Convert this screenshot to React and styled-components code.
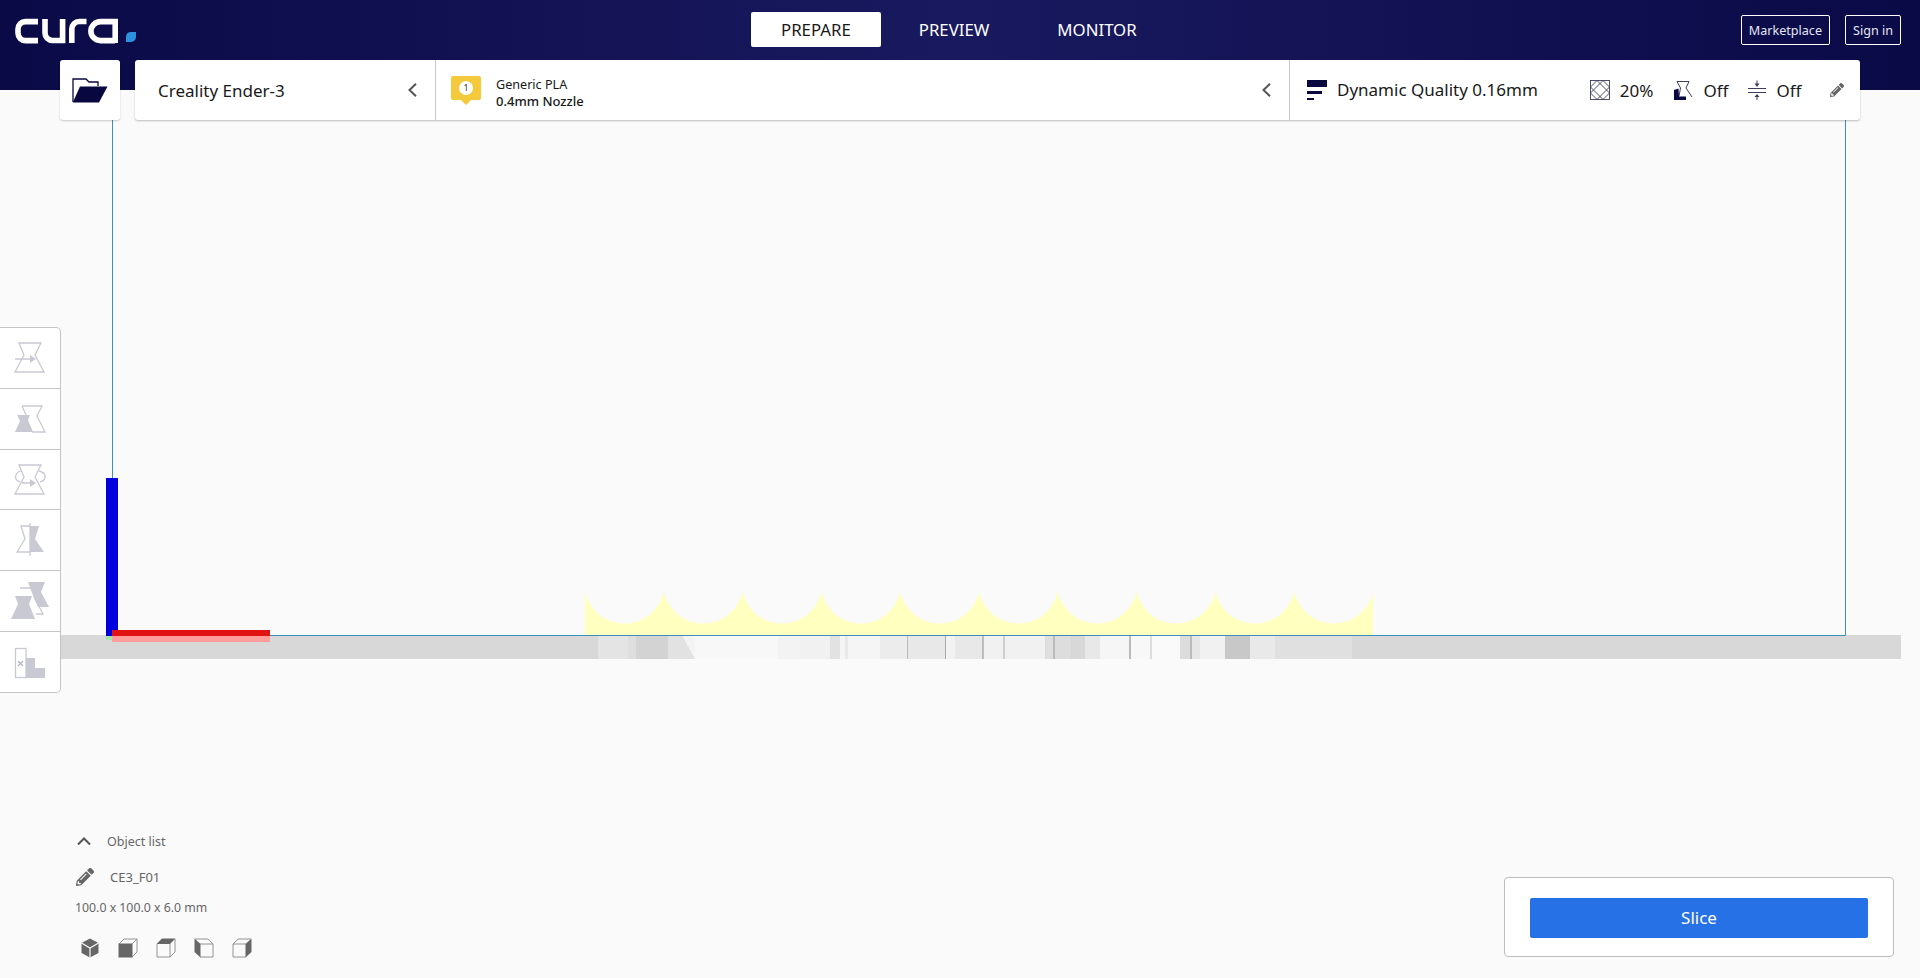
import React from 'react'
import styled, { createGlobalStyle } from 'styled-components'
import { FaPencilAlt } from 'react-icons/fa'

const GlobalStyle = createGlobalStyle`
  html, body {
    margin: 0;
    padding: 0;
    height: 100%;
    overflow: hidden;
    background: #fafafa;
    font-family: 'Noto Sans', 'Open Sans', sans-serif;
    color: #191919;
  }
  * { box-sizing: border-box; }
`

// stripes of the plate edge seen from the side: [x, width, colour]
const plateStripes = [
  [598, 30, '#e4e4e4'], [628, 8, '#dedede'], [636, 32, '#d3d3d3'], [695, 83, '#f8f8f8'],
  [778, 22, '#f3f3f3'], [800, 30, '#f1f1f1'], [830, 10, '#e2e2e2'], [840, 40, '#f5f5f5'],
  [845, 3, '#e9e9e9'], [880, 27, '#ececec'], [907, 1, '#b9b9b9'], [908, 37, '#e8e8e8'],
  [945, 1, '#aaaaaa'], [946, 9, '#f2f2f2'], [955, 27, '#e8e8e8'], [982, 2, '#bdbdbd'],
  [984, 61, '#f1f1f1'], [1003, 2, '#cfcfcf'], [1045, 8, '#dedede'], [1053, 2, '#bbbbbb'],
  [1055, 16, '#dddddd'], [1071, 14, '#d8d8d8'], [1085, 15, '#e8e8e8'], [1100, 29, '#f6f6f6'],
  [1129, 2, '#bbbbbb'], [1131, 19, '#f8f8f8'], [1150, 2, '#dddddd'], [1152, 28, '#fafafa'],
  [1180, 10, '#dcdcdc'], [1190, 2, '#bbbbbb'], [1192, 8, '#e6e6e6'], [1200, 25, '#f1f1f1'],
  [1225, 25, '#c8c8c8'], [1250, 25, '#e9e9e9'], [1275, 77, '#e0e0e0'],
]

const scallopPath = () => {
  let d = 'M585 635 V592'
  for (let i = 1; i <= 10; i++) {
    d += ` A40.4 40.4 0 0 0 ${585 + i * 78.8} 592`
  }
  return d + ' V635 Z'
}

const Scene = () => (
  <SceneSvg viewBox="0 0 1920 978">
    <defs>
      <filter id="soften" x="0" y="0" width="100%" height="100%">
        <feGaussianBlur stdDeviation="0.7 0" />
      </filter>
    </defs>
    <rect x="61" y="635" width="1840" height="24" fill="#d8d8d8" />
    <g filter="url(#soften)">
      <rect x="598" y="635" width="754" height="24" fill="#f4f4f4" />
      {plateStripes.map(([x, w, c]) => (
        <rect key={x + c} x={x} y="635" width={w} height="24" fill={c} />
      ))}
      <polygon points="668,635 682,635 695,659 668,659" fill="#e2e2e2" />
    </g>
    <path d={scallopPath()} fill="#ffffbf" />
    <path d="M112.5 100 V635.5 H1845.5 V100" fill="none" stroke="#3f8fb8" strokeWidth="1" />
    <rect x="106" y="636" width="6" height="4" fill="#a6e6a6" />
    <rect x="106" y="478" width="12" height="158" fill="#0000de" />
    <rect x="112" y="630" width="158" height="6" fill="#e01212" />
    <rect x="112" y="636" width="158" height="6" fill="#ff9c9c" />
  </SceneSvg>
)

const CuraLogo = () => (
  <svg width="122" height="26" viewBox="0 0 122 26" fill="none" stroke="#fff" strokeWidth="5.6">
    <path d="M23 3.6 H10.5 a7.5 7.5 0 0 0 -7.5 7.5 v4 a7.5 7.5 0 0 0 7.5 7.5 H23" />
    <path d="M30 1 V15 a7.5 7.5 0 0 0 7.5 7.5 H47.6 V1" />
    <path d="M56.8 25 V11 a7.5 7.5 0 0 1 7.5 -7.5 H71.5" />
    <path d="M100.2 25 V3.6 H85.5 a9.6 9.6 0 0 0 -9.6 9.6 a9.6 9.6 0 0 0 9.6 9.4 H100.2" />
    <path
      d="M115.5 14 H121 V19 a5 5 0 0 1 -5 5 H111 V19 a5 5 0 0 1 4.5 -5 Z"
      fill="#2c92de"
      stroke="none"
    />
  </svg>
)

const FolderIcon = () => (
  <svg width="36" height="26" viewBox="0 0 36 26">
    <path d="M1 24 V1 H14 L17 4 H26 V8" fill="none" stroke="#08073f" strokeWidth="1.3" />
    <path d="M8 8.5 H35.5 L27 24.5 H0.8 Z" fill="#08073f" />
  </svg>
)

const Chevron = ({ up }) => (
  <svg width="14" height="14" viewBox="0 0 14 14" fill="none" stroke="#555" strokeWidth="2">
    {up ? <path d="M1 10.5 L7 4.5 L13 10.5" /> : <path d="M10 0.8 L3.5 7 L10 13.2" />}
  </svg>
)

const MaterialBadge = () => (
  <svg width="30" height="29" viewBox="0 0 30 29">
    <path d="M2 0 H28 a2 2 0 0 1 2 2 V22 a2 2 0 0 1 -2 2 H20 L15 29 L10 24 H2 a2 2 0 0 1 -2 -2 V2 a2 2 0 0 1 2 -2 Z" fill="#f4c93c" />
    <circle cx="15" cy="12" r="7" fill="#fff" />
    <text x="15" y="15.2" textAnchor="middle" fontSize="9" fontFamily="Noto Sans" fill="#333">1</text>
  </svg>
)

const QualityIcon = () => (
  <svg width="20" height="20" viewBox="0 0 20 20" fill="#08073f">
    <rect x="0" y="0" width="20" height="7" />
    <rect x="0" y="11" width="15" height="3" />
    <rect x="0" y="18" width="7" height="2" />
  </svg>
)

const InfillIcon = () => (
  <svg width="20" height="20" viewBox="0 0 20 20" fill="none" stroke="#3c3c5c" strokeWidth="0.9">
    <rect x="0.5" y="0.5" width="19" height="19" />
    <path d="M0.5 7 L7 0.5 L19.5 13 L13 19.5 L0.5 7 M13 0.5 L19.5 7 L7 19.5 L0.5 13 L13 0.5" />
  </svg>
)

const SupportIcon = () => (
  <svg width="20" height="20" viewBox="0 0 20 20">
    <path d="M6 16 L7.5 8 L4 1.5 H16 L13 8 L19 17" fill="none" stroke="#3c3c5c" strokeWidth="1" />
    <path d="M1 10 L5.5 8.5 L6 16.5 H13 V20 H1 Z" fill="#08073f" />
  </svg>
)

const AdhesionIcon = () => (
  <svg width="18" height="20" viewBox="0 0 18 20" fill="#3c3c5c">
    <rect x="0" y="8" width="18" height="1" />
    <rect x="0" y="12" width="18" height="1" />
    <path d="M9 7 L6.5 3.5 H8.5 V0.5 H9.5 V3.5 H11.5 Z" />
    <path d="M9 14 L11.5 17 H9.5 V20 H8.5 V17 H6.5 Z" />
  </svg>
)

const VASE = 'M7 3 H29 L23 15 L32 32 H3 L12 15 Z'
const toolIcons = [
  {
    key: 'move',
    size: 36,
    body: (
      <>
        <path d={VASE} fill="none" stroke="#c9c9d4" strokeWidth="1.3" />
        <path d="M3 19 H18" stroke="#c9c9d4" strokeWidth="1.5" />
        <path d="M18 15 L24 19 L18 23 Z" fill="#c9c9d4" />
      </>
    ),
  },
  {
    key: 'scale',
    size: 36,
    body: (
      <>
        <path d="M10 5 H30 L25 15 L33 31 H20 M14 14 L10 5" fill="none" stroke="#c9c9d4" strokeWidth="1.3" />
        <path d="M5 14 H18 L16 19 L21 31 H3 L8 20 Z" fill="#c9c9d4" />
      </>
    ),
  },
  {
    key: 'rotate',
    size: 36,
    body: (
      <>
        <path d={VASE} fill="none" stroke="#c9c9d4" strokeWidth="1.3" />
        <path d="M9 9 C2 11 2 18 8 20 M27 9 C35 11 35 18 28 20" fill="none" stroke="#c9c9d4" strokeWidth="1.3" />
        <path d="M10 21 H19" stroke="#c9c9d4" strokeWidth="1.5" />
        <path d="M18 17 L24 21 L18 25 Z" fill="#c9c9d4" />
      </>
    ),
  },
  {
    key: 'mirror',
    size: 36,
    body: (
      <>
        <path d="M18 4 H9 L13 17 L5 30 H18" fill="none" stroke="#c9c9d4" strokeWidth="1.3" />
        <path d="M18 4 H27 L23 17 L32 30 H18 Z" fill="#c9c9d4" />
        <path d="M18 1 V34" stroke="#c9c9d4" strokeWidth="1.3" />
      </>
    ),
  },
  {
    key: 'permodel',
    size: 44,
    body: (
      <>
        <path d="M20 3 H37 L33 13 L41 28 H30 L24 14 Z" fill="#c9c9d4" />
        <path d="M12 9 H29 L26 18 L35 35 H28" fill="none" stroke="#c9c9d4" strokeWidth="1.3" />
        <path d="M7 17 H24 L21 25 L27 40 H3 L10 25 Z" fill="#c9c9d4" />
      </>
    ),
  },
  {
    key: 'blocker',
    size: 36,
    body: (
      <>
        <rect x="3.5" y="4.5" width="10.5" height="29" fill="none" stroke="#c9c9d4" strokeWidth="1.3" />
        <path d="M14 14 H23 V24 H33 V34 H14 Z" fill="#c9c9d4" />
        <path d="M6 17 L11 22 M11 17 L6 22" stroke="#b4b4c2" strokeWidth="1.2" />
      </>
    ),
  },
]

const viewFaces = [
  {
    key: 'iso',
    body: (
      <>
        <path d="M10 0.5 L18.5 5 V15 L10 19.5 L1.5 15 V5 Z" fill="#666" />
        <path d="M1.5 5 L10 10 L18.5 5 M10 10 V19.5" fill="none" stroke="#fafafa" strokeWidth="1.2" />
      </>
    ),
  },
  {
    key: 'front',
    body: (
      <>
        <path d="M1 6 L6 1 H19 V14 L14 19 M14 6 L19 1" fill="none" stroke="#888" strokeWidth="0.9" />
        <rect x="0.5" y="5.5" width="14" height="14" fill="#666" />
      </>
    ),
  },
  {
    key: 'top',
    body: (
      <>
        <path d="M1 6 V19 H14 L19 14 V1 M14 6 V19" fill="none" stroke="#888" strokeWidth="0.9" />
        <path d="M0.5 6 L6 0.5 H19.5 L14 6 Z" fill="#666" />
      </>
    ),
  },
  {
    key: 'left',
    body: (
      <>
        <path d="M1 1 H14 L19 6 V19 H6 M6 6 H19" fill="none" stroke="#888" strokeWidth="0.9" />
        <path d="M0.5 0.5 L6.5 6 V19.5 L0.5 14 Z" fill="#666" />
      </>
    ),
  },
  {
    key: 'right',
    body: (
      <>
        <path d="M14 6 H1 V19 H14 M1 6 L6 1 H19" fill="none" stroke="#888" strokeWidth="0.9" />
        <path d="M19.5 0.5 L13.5 6 V19.5 L19.5 14 Z" fill="#666" />
      </>
    ),
  },
]

const App = () => {
  return (
    <Page>
      <GlobalStyle />
      <Scene />

      <Header>
        <LogoSlot>
          <CuraLogo />
        </LogoSlot>
        <Tabs>
          <Tab $active>PREPARE</Tab>
          <Tab>PREVIEW</Tab>
          <Tab>MONITOR</Tab>
        </Tabs>
        <HeaderActions>
          <OutlineButton>Marketplace</OutlineButton>
          <OutlineButton>Sign in</OutlineButton>
        </HeaderActions>
      </Header>

      <ActionRow>
        <OpenButton>
          <FolderIcon />
        </OpenButton>
        <StageBar>
          <PrinterCell>
            <PrinterName>Creality Ender-3</PrinterName>
            <Chevron />
          </PrinterCell>
          <MaterialCell>
            <MaterialBadge />
            <MaterialLabels>
              <span>Generic PLA</span>
              <strong>0.4mm Nozzle</strong>
            </MaterialLabels>
            <ChevronSlot>
              <Chevron />
            </ChevronSlot>
          </MaterialCell>
          <QualityCell>
            <QualityIcon />
            <BarText>Dynamic Quality 0.16mm</BarText>
            <SettingsGroup>
              <InfillIcon />
              <SettingValue>20%</SettingValue>
              <SupportIcon />
              <SettingValue>Off</SettingValue>
              <AdhesionIcon />
              <SettingValue>Off</SettingValue>
            </SettingsGroup>
            <EditPencil>
              <FaPencilAlt size={14} />
            </EditPencil>
          </QualityCell>
        </StageBar>
      </ActionRow>

      <Workspace>
        <ToolRail>
          {toolIcons.map(tool => (
            <ToolButton key={tool.key}>
              <svg width={tool.size} height={tool.size} viewBox={`0 0 ${tool.size} ${tool.size}`}>
                {tool.body}
              </svg>
            </ToolButton>
          ))}
        </ToolRail>

        <BottomRow>
          <ObjectPanel>
            <ObjectListToggle>
              <Chevron up />
              <span>Object list</span>
            </ObjectListToggle>
            <ObjectName>
              <FaPencilAlt size={18} color="#666" />
              <span>CE3_F01</span>
            </ObjectName>
            <ObjectSize>100.0 x 100.0 x 6.0 mm</ObjectSize>
            <ViewIcons>
              {viewFaces.map(face => (
                <svg key={face.key} width="20" height="20" viewBox="0 0 20 20">
                  {face.body}
                </svg>
              ))}
            </ViewIcons>
          </ObjectPanel>
          <SlicePanel>
            <SliceButton>Slice</SliceButton>
          </SlicePanel>
        </BottomRow>
      </Workspace>
    </Page>
  )
}

const Page = styled.div`
  position: relative;
  display: flex;
  flex-direction: column;
  width: 100%;
  height: 100vh;
  overflow: hidden;
  background: #fafafa;
`

const SceneSvg = styled.svg`
  position: absolute;
  inset: 0;
  width: 1920px;
  height: 978px;
`

const Header = styled.header`
  position: relative;
  display: flex;
  flex: none;
  height: 90px;
  background: linear-gradient(90deg, #0a0a47 0%, #19195f 50%, #0a0a47 100%);
`

const LogoSlot = styled.div`
  flex: none;
  width: 751px;
  padding: 18px 0 0 15px;
`

const Tabs = styled.nav`
  display: flex;
  align-items: flex-start;
  gap: 8px;
  padding-top: 12px;
`

const Tab = styled.button`
  height: 35px;
  padding: 0 30px;
  border: 0;
  border-radius: 2px;
  background: ${p => (p.$active ? '#fff' : 'transparent')};
  color: ${p => (p.$active ? '#191919' : '#fff')};
  font-family: inherit;
  font-size: 16.8px;
`

const HeaderActions = styled.div`
  display: flex;
  align-items: flex-start;
  gap: 15px;
  margin-left: auto;
  padding: 15px 19px 0 0;
`

const OutlineButton = styled.button`
  height: 30px;
  padding: 0 7px;
  border: 1px solid #fff;
  border-radius: 2px;
  background: transparent;
  color: #e4e6f4;
  font-family: inherit;
  font-size: 12.6px;
`

const ActionRow = styled.div`
  position: relative;
  display: flex;
  flex: none;
  gap: 15px;
  height: 60px;
  margin-top: -30px;
  padding: 0 60px;
`

const OpenButton = styled.button`
  display: flex;
  align-items: center;
  justify-content: center;
  flex: none;
  width: 60px;
  height: 60px;
  padding: 2px 0 0;
  border: 0;
  border-radius: 3px;
  background: #fff;
  box-shadow: 0 1px 2px rgba(0, 0, 0, 0.2);
`

const StageBar = styled.div`
  display: flex;
  flex: 1;
  height: 60px;
  border-radius: 3px;
  background: #fff;
  box-shadow: 0 1px 2px rgba(0, 0, 0, 0.25);
`

const PrinterCell = styled.div`
  display: flex;
  align-items: center;
  justify-content: space-between;
  flex: none;
  width: 301px;
  padding: 0 15px 0 23px;
  border-right: 1px solid #c8c8c8;
`

const BarText = styled.span`
  font-size: 17px;
  line-height: 24px;
  color: #191919;
`

const PrinterName = styled(BarText)`
  margin-top: 2px;
`

const MaterialCell = styled.div`
  display: flex;
  align-items: center;
  flex: none;
  width: 854px;
  padding: 0 15px 0 15px;
  border-right: 1px solid #c8c8c8;
`

const MaterialLabels = styled.div`
  display: flex;
  flex-direction: column;
  margin: 6px 0 0 15px;
  font-size: 12.6px;
  line-height: 17px;
  color: #191919;

  strong {
    font-size: 13px;
    font-weight: 500;
  }
`

const ChevronSlot = styled.div`
  display: flex;
  margin-left: auto;
`

const QualityCell = styled.div`
  display: flex;
  align-items: center;
  flex: 1;
  gap: 10px;
  padding-left: 17px;
`

const SettingsGroup = styled.div`
  display: flex;
  align-items: center;
  gap: 10px;
  margin-left: 42px;
`

const SettingValue = styled.span`
  margin-right: 10px;
  font-size: 17px;
  color: #191919;
`

const EditPencil = styled.span`
  display: flex;
  margin-left: 9px;
  color: #666;
`

const Workspace = styled.main`
  position: relative;
  display: flex;
  flex: 1;
  flex-direction: column;
  justify-content: space-between;
  padding-top: 207px;
`

const ToolRail = styled.div`
  display: flex;
  flex-direction: column;
  width: 61px;
  height: 366px;
  border: 1px solid #c4c4c4;
  border-left: 0;
  border-radius: 0 5px 5px 0;
  background: #fff;
`

const ToolButton = styled.div`
  display: flex;
  align-items: center;
  justify-content: center;
  flex: 1;
  border-bottom: 1px solid #c4c4c4;

  &:last-child {
    border-bottom: 0;
  }
`

const BottomRow = styled.div`
  display: flex;
  align-items: flex-end;
  justify-content: space-between;
  padding: 0 26px 21px 75px;
`

const ObjectPanel = styled.div`
  display: flex;
  flex-direction: column;
  font-size: 13px;
  color: #666;
`

const ObjectListToggle = styled.div`
  display: flex;
  align-items: center;
  gap: 16px;
  height: 20px;
  padding-left: 2px;
  font-size: 12.5px;
`

const ObjectName = styled.div`
  display: flex;
  align-items: center;
  gap: 16px;
  height: 20px;
  margin-top: 16px;
  padding-left: 1px;
`

const ObjectSize = styled.div`
  height: 20px;
  margin-top: 11px;
  font-size: 12.3px;
  line-height: 20px;
`

const ViewIcons = styled.div`
  display: flex;
  gap: 18px;
  height: 20px;
  margin: 20px 0 -1px;
  padding-left: 5px;
`

const SlicePanel = styled.div`
  width: 390px;
  height: 80px;
  padding: 20px 25px;
  border: 1px solid #bdbdbd;
  border-radius: 4px;
  background: #fff;
`

const SliceButton = styled.button`
  display: block;
  width: 100%;
  height: 40px;
  padding: 0 0 2px;
  border: 0;
  border-radius: 2px;
  background: #2671e5;
  color: #fff;
  font-family: inherit;
  font-size: 17px;
`

export default App
